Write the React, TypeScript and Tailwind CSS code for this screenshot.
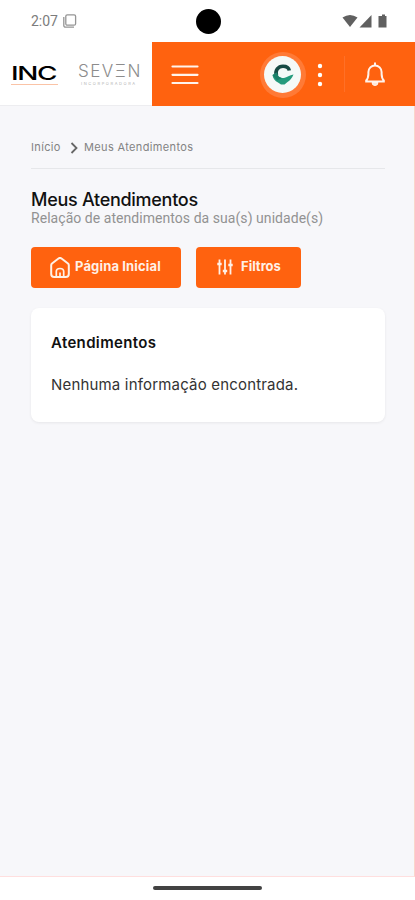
import type { ReactNode } from "react";

function StatusBar() {
  return (
    <div className="relative flex h-[42px] items-center justify-between bg-white pr-[27px] pl-[31px] text-[#7c7c7c]">
      <div className="flex items-center gap-[5px] font-['Roboto',sans-serif] text-[14px] leading-none tracking-[-0.05px]">
        <span>2:07</span>
        <svg width="14" height="14" viewBox="0 0 14 14" fill="none" stroke="#959595">
          <rect x="2.8" y="0.8" width="9.8" height="10.4" rx="1.5" strokeWidth="1.3" />
          <path d="M0.8 3v8.5a1.7 1.7 0 0 0 1.7 1.7H11" strokeWidth="1.3" />
        </svg>
      </div>
      <span className="absolute top-[9px] left-[195.5px] size-[25px] rounded-full bg-black" />
      <svg width="46" height="14" viewBox="0 0 46 14" fill="#606060">
        <path d="M0.5 3.5Q8 -1.5 15.5 3.5L8 13Z" />
        <path d="M29.5 1v12.5h-12Z" />
        <path d="M38.5 2h1.5V0.5h3V2H44.5v11.5h-8V2Z" />
      </svg>
    </div>
  );
}

function Logos() {
  return (
    <div className="flex h-16 w-[152px] shrink-0 items-start border-b border-[#ededf0] bg-white pt-[22px] pl-[11px] font-['Inter',sans-serif]">
      <div className="h-6 w-[67px]">
        <div className="h-[18px] w-max origin-left scale-x-[1.47] text-[19px] leading-[20px] font-medium tracking-[-0.9px] text-black">
          INC
        </div>
        <div className="mt-[2px] h-px w-[47px] bg-[#fac3a6]" />
      </div>
      <div>
        <div className="h-[17px] w-max text-[17px] leading-[15px] font-light tracking-[1.5px] text-[#8c8c8c]">
          SEV<span>Ξ</span>N
        </div>
        <div className="pl-[3px] text-[4px] leading-[5px] tracking-[1.6px] text-[#b5b5b5]">INCORPORADORA</div>
      </div>
    </div>
  );
}

function Avatar() {
  return (
    <span className="flex size-[46px] items-center justify-center rounded-full bg-[#ff7a36]">
      <span className="flex size-[37px] items-center justify-center rounded-full bg-[#f5faf8]">
        <svg width="22" height="21" viewBox="0 0 22 21" fill="none">
          <path d="M4.5 12C2.5 6 6.5 2.2 11 2.2c3.500 0 5.700 1.300 6.300 4.300" stroke="#164b44" strokeWidth="3.6" />
          <path d="M.5 11L5 8.500c.3 4 3.500 6 7 5.500 3-.4 5.500-3 9.500-3.500-1.500 3.500-3.500 6-6 7.500l-3 2.500H9l-3-2C3 17 1 14.500.5 11Z" fill="#249b7c" />
          <path d="M.5 11L5 8.500c0 3 2 5 5 5.500l-5 2.500Z" fill="#1b8069" />
        </svg>
      </span>
    </span>
  );
}

function Header() {
  return (
    <header className="flex h-16">
      <Logos />
      <div className="flex flex-1 items-center bg-[#ff620f] pl-[19px]">
        <svg className="mt-[2px]" width="28" height="20" viewBox="0 0 28 20" stroke="#fff3ec" strokeWidth="2.2" strokeLinecap="round">
          <path d="M1.5 1.5h25M1.5 9.8h25M1.5 18h25" />
        </svg>
        <div className="mt-px ml-[60.5px]">
          <Avatar />
        </div>
        <svg className="mt-[2px] ml-[11.5px]" width="6" height="24" viewBox="0 0 6 24" fill="white">
          <circle cx="3" cy="3" r="2.2" />
          <circle cx="3" cy="12" r="2.2" />
          <circle cx="3" cy="21" r="2.2" />
        </svg>
        <span className="ml-[21px] h-9 w-px bg-[#ff7027]" />
        <svg className="ml-[19px]" width="22" height="25" viewBox="0 0 22 25" fill="none" stroke="#fff3ec" strokeWidth="2" strokeLinejoin="round">
          <path d="M11 .5v2.8M1.2 19.5h19.6M1.8 19c1.8-1.8 2.6-3.5 2.6-7V10a6.6 6.6 0 0 1 13.2 0v2c0 3.5.8 5.2 2.6 7" />
          <path d="M8 20.5a3 3 0 0 0 6 0Z" fill="#ffe5d6" strokeWidth="1" />
        </svg>
      </div>
    </header>
  );
}

function Breadcrumb() {
  return (
    <nav className="flex h-[42px] items-center border-b border-[#e6e7ea] text-[11px] leading-none text-[#838383]">
      <span className="w-[39px] tracking-[0.35px]">Início</span>
      <svg width="9" height="12" viewBox="0 0 9 12" fill="none" stroke="#666" strokeWidth="1.8">
        <path d="M1.5 1l5 5-5 5" />
      </svg>
      <span className="ml-[5px] tracking-[0.35px]">Meus Atendimentos</span>
    </nav>
  );
}

function ActionButton({ icon, children }: { icon: ReactNode; children: ReactNode }) {
  return (
    <button className="flex h-[41px] items-center rounded-[4px] bg-[#ff620f] px-5 pb-px text-[13px] font-bold text-[#fff0e6]">
      {icon}
      {children}
    </button>
  );
}

function HomeIcon() {
  return (
    <svg className="mr-[5px] -ml-px" width="20" height="21" viewBox="0 0 20 21" fill="none" stroke="currentColor" strokeWidth="2" strokeLinejoin="round">
      <path d="M1.2 8.2Q1.2 7.2 2 6.5L8.8 1.3q1.2-.8 2.4 0L18 6.5q.8.7.8 1.7V17q0 3-3 3H4.200q-3 0-3-3Z" />
      <path d="M6.300 19.500v-5q0-3 3.700-3t3.700 3v5M10 15.500v4" strokeWidth="1.7" />
    </svg>
  );
}

function FiltersIcon() {
  return (
    <svg className="mr-2 ml-px" width="16" height="16" viewBox="0 0 16 16" fill="none" stroke="currentColor" strokeWidth="1.8">
      <path d="M2.500 .5v15M8 .5v15M13.500 .5v15" />
      <path d="M.3 5h4.400M5.800 12h4.400M11.300 6h4.400" strokeWidth="2.4" />
    </svg>
  );
}

export default function App() {
  return (
    <div className="flex h-[900px] w-[415px] flex-col overflow-hidden bg-white font-['Inter',sans-serif]">
      <StatusBar />
      <Header />
      <main className="flex-1 border-r border-b border-r-[#fbd5cb] border-b-[#ffdfdf] bg-[#f7f7fa] pt-[21px] pr-[29px] pl-[31px]">
        <Breadcrumb />
        <div className="pt-5">
          <h1 className="text-[18px] leading-[22px] font-medium tracking-[-0.28px] whitespace-nowrap text-[#111]">Meus Atendimentos</h1>
          <p className="font-['Roboto',sans-serif] text-[14px] leading-[15px] tracking-[0.05px] whitespace-nowrap text-[#929292]">
            Relação de atendimentos da sua(s) unidade(s)
          </p>
        </div>
        <div className="mt-[21px] flex gap-[15px]">
          <ActionButton icon={<HomeIcon />}>
            <span className="w-[86px] text-left tracking-[0.15px] whitespace-nowrap">Página Inicial</span>
          </ActionButton>
          <ActionButton icon={<FiltersIcon />}>
            <span className="w-10 text-left whitespace-nowrap">Filtros</span>
          </ActionButton>
        </div>
        <section className="mt-5 h-[114px] rounded-lg bg-white px-5 pt-[25px] shadow-[0_1px_3px_rgba(0,0,0,0.07)]">
          <h2 className="text-[15px] leading-5 font-semibold tracking-[0.35px] text-[#111]">Atendimentos</h2>
          <p className="mt-[22px] text-[15px] leading-5 tracking-[0.18px] whitespace-nowrap text-[#333]">Nenhuma informação encontrada.</p>
        </section>
      </main>
      <footer className="flex h-[23px] justify-center pt-[9px]">
        <span className="h-[4px] w-[109px] rounded-full bg-[#424242]" />
      </footer>
    </div>
  );
}
